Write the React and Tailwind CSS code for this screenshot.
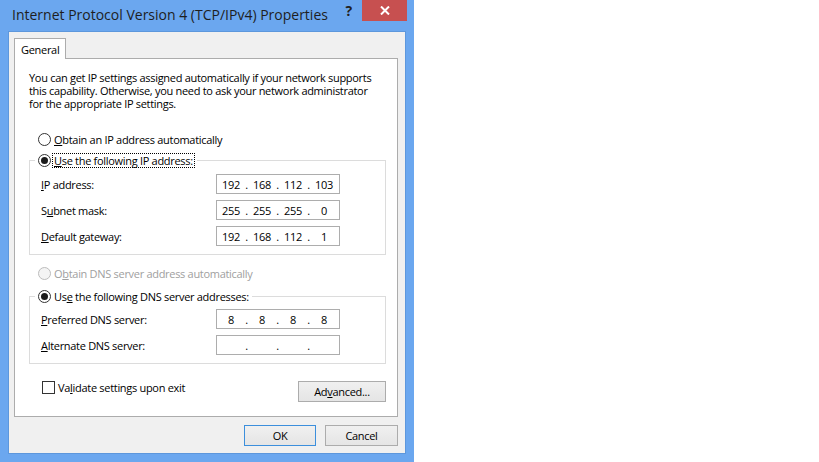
import { Fragment } from "react";

const Radio = ({ checked, disabled }) => (
  <span
    className={
      disabled
        ? "w-[13px] h-[13px] rounded-full border border-[#bcbcbc] bg-[#f4f4f4] flex items-center justify-center shrink-0"
        : "w-[13px] h-[13px] rounded-full border border-[#333333] bg-white flex items-center justify-center shrink-0"
    }
  >
    {checked && <span className="w-[7px] h-[7px] rounded-full bg-[#1b1b1b]" />}
  </span>
);

const IpBox = ({ parts }) => (
  <div className="w-[124px] h-[20px] border border-[#adadad] bg-white flex items-center pl-[1px]">
    {parts.map((p, i) => (
      <Fragment key={i}>
        {i > 0 && <span className="w-[5px] text-center">.</span>}
        <span className="w-[26px] text-center">{p}</span>
      </Fragment>
    ))}
  </div>
);

const Row = ({ label, parts }) => (
  <div className="flex items-center h-[20px]">
    <span className="w-[175px]">{label}</span>
    <IpBox parts={parts} />
  </div>
);

const Btn = ({ children, primary, className = "" }) => (
  <button
    type="button"
    className={
      (primary
        ? "border-[#3c8fdc] "
        : "border-[#acacac] ") +
      "h-[21px] border bg-gradient-to-b from-[#f0f0f0] to-[#e5e5e5] text-black flex items-center justify-center " +
      className
    }
  >
    {children}
  </button>
);

const App = () => {
  return (
    <div className="w-[819px] h-[462px] bg-white flex font-['Open_Sans',sans-serif] text-[11px] tracking-[-0.3px] text-black leading-[13px]">
      <div className="w-[414px] h-[462px] bg-[#6ba7ef] flex flex-col">
        {/* title bar */}
        <div className="h-[31px] flex items-start shrink-0">
          <span className="ml-[12px] mt-[6px] text-[14px] leading-[18px] tracking-normal text-[#1e1e1e] whitespace-nowrap">
            Internet Protocol Version 4 (TCP/IPv4) Properties
          </span>
          <span className="ml-auto mt-[3px] text-[14px] leading-[16px] font-bold text-[#222]">?</span>
          <div className="ml-[10px] mr-[7px] w-[45px] h-[21px] bg-[#c75050] flex items-center justify-center">
            <svg width="10" height="9" viewBox="0 0 10 9">
              <path d="M1 0.5 L9 8.5 M9 0.5 L1 8.5" stroke="white" strokeWidth="2" />
            </svg>
          </div>
        </div>

        {/* client area */}
        <div className="ml-[8px] w-[398px] h-[423px] border border-[#5d97dc] bg-[#f0f0f0] flex flex-col pl-[5px] pt-[6px]">
          <div className="w-[52px] h-[21px] border border-b-0 border-[#acacac] bg-white -mb-px relative z-10 flex items-center pl-[6px]">
            General
          </div>
          <div className="w-[384px] h-[359px] border border-[#acacac] bg-white flex flex-col">
            <p className="mt-[12px] ml-[14px] whitespace-nowrap">
              You can get IP settings assigned automatically if your network supports
              <br />
              this capability. Otherwise, you need to ask your network administrator
              <br />
              for the appropriate IP settings.
            </p>

            <label className="mt-[19px] ml-[23px] h-[20px] flex items-center gap-[2px]">
              <Radio />
              <span className="pl-[1px]">
                <u>O</u>btain an IP address automatically
              </span>
            </label>

            <fieldset className="mt-[1px] ml-[14px] w-[357px] border border-[#dcdcdc] pl-[11px] pt-[4px] pb-[8px] flex flex-col gap-[6px]">
              <legend className="ml-[-6px] pl-[3px] pr-[2px] h-[20px] flex items-center gap-[1px]">
                <Radio checked />
                <span className="border border-dotted border-black px-[1px] leading-[13px]">
                  <u>U</u>se the following IP address:
                </span>
              </legend>
              <Row label={<><u>I</u>P address:</>} parts={["192", "168", "112", "103"]} />
              <Row label={<>S<u>u</u>bnet mask:</>} parts={["255", "255", "255", "0"]} />
              <Row label={<><u>D</u>efault gateway:</>} parts={["192", "168", "112", "1"]} />
            </fieldset>

            <label className="mt-[8px] ml-[23px] h-[20px] flex items-center gap-[2px] text-[#a0a0a0]">
              <Radio disabled />
              <span className="pl-[1px]">
                O<u>b</u>tain DNS server address automatically
              </span>
            </label>

            <fieldset className="mt-[3px] ml-[14px] w-[357px] border border-[#dcdcdc] pl-[11px] pt-[3px] pb-[8px] flex flex-col gap-[6px]">
              <legend className="ml-[-6px] pl-[3px] pr-[3px] h-[20px] flex items-center gap-[2px]">
                <Radio checked />
                <span className="pl-[1px]">
                  Us<u>e</u> the following DNS server addresses:
                </span>
              </legend>
              <Row label={<><u>P</u>referred DNS server:</>} parts={["8", "8", "8", "8"]} />
              <Row label={<><u>A</u>lternate DNS server:</>} parts={["", "", "", ""]} />
            </fieldset>

            <div className="mt-[17px] ml-[27px] w-[344px] flex items-start justify-between">
              <label className="flex items-center gap-[3px] h-[13px]">
                <span className="w-[13px] h-[13px] border border-[#333333] bg-white" />
                <span>
                  Va<u>l</u>idate settings upon exit
                </span>
              </label>
              <Btn className="w-[88px]">
                Ad<u>v</u>anced...
              </Btn>
            </div>
          </div>

          <div className="w-[384px] mt-[8px] flex justify-end gap-[9px]">
            <Btn primary className="w-[72px]">OK</Btn>
            <Btn className="w-[73px]">Cancel</Btn>
          </div>
        </div>
      </div>
    </div>
  );
};

export default App;
